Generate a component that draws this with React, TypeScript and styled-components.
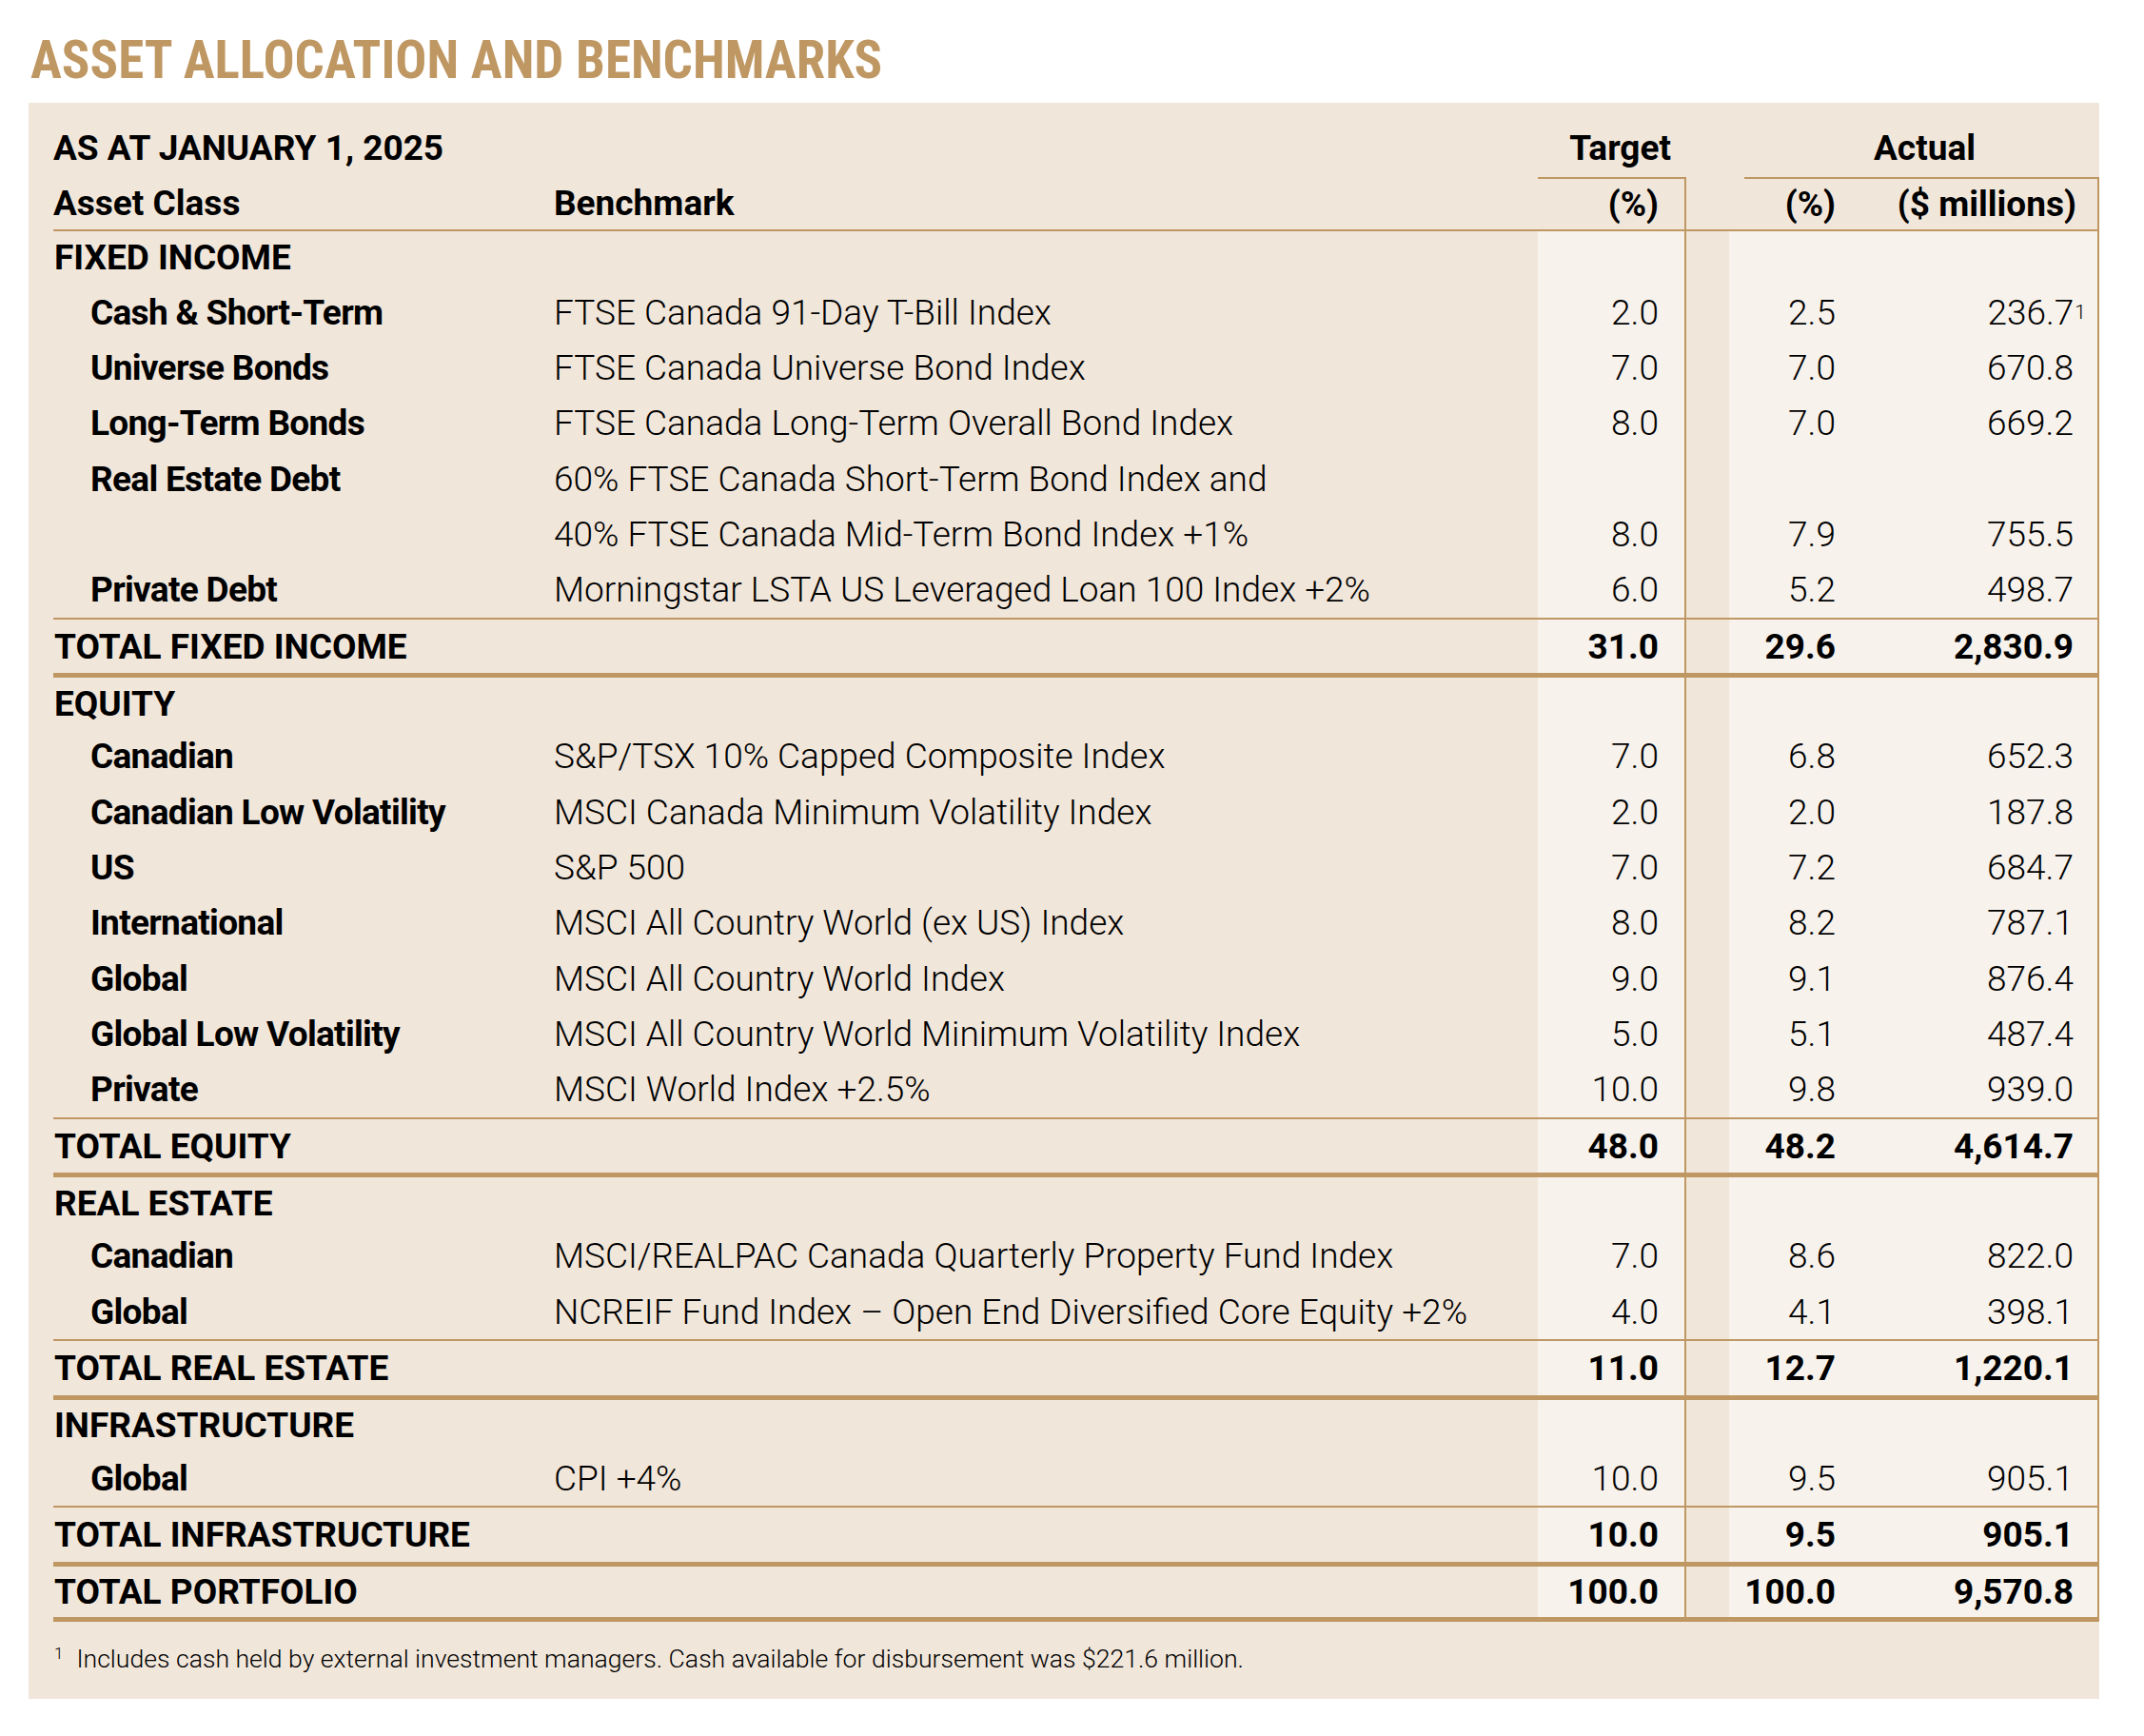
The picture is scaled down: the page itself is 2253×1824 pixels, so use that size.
import React from "react";
import styled, { createGlobalStyle } from "styled-components";

const GOLD = "#BF9762";
const PANEL = "#F1E6DA";
const LIGHT = "#F7F2EC";
const ROW_H = 58.333;

const GlobalStyle = createGlobalStyle`
  html, body { margin: 0; padding: 0; background: #ffffff; }
  body { font-family: Roboto, "Liberation Sans", sans-serif; color: #000; }
`;

const Page = styled.main`
  width: 2253px;
  box-sizing: border-box;
  padding: 36px 0 0 30px;
`;

const Title = styled.h1`
  margin: 0 0 17px 2px;
  font-family: Roboto, "Liberation Sans", sans-serif;
  font-weight: 700;
  font-stretch: 85%;
  font-size: 55px;
  line-height: 55px;
  color: ${GOLD};
`;

const Panel = styled.section`
  width: 2176px;
  box-sizing: border-box;
  background: ${PANEL};
  padding: 16px 0 27px 26px;
`;

const COLS = "526px 1034px 156px 45px 143px 246px";

type Edge = "thin" | "thick" | undefined;
const edge = (e: Edge) =>
  e === "thick" ? `5px solid ${GOLD}` : e === "thin" ? `2px solid ${GOLD}` : "none";

const Row = styled.div<{ $top?: Edge; $bottom?: Edge; $h: number }>`
  display: grid;
  grid-template-columns: ${COLS};
  box-sizing: border-box;
  height: ${(p) => p.$h}px;
  border-top: ${(p) => edge(p.$top)};
  border-bottom: ${(p) => edge(p.$bottom)};
  font-size: 37px;
  line-height: 1;
`;

const Cell = styled.div`
  display: flex;
  align-items: center;
  min-width: 0;
  white-space: nowrap;
`;

const HeadText = styled(Cell)<{ $span?: string }>`
  font-weight: 700;
  grid-column: ${(p) => p.$span ?? "auto"};
`;

const GroupTitle = styled(Cell)<{ $align: "end" | "center"; $span: string; $pr?: number; $ml?: number }>`
  font-weight: 700;
  grid-column: ${(p) => p.$span};
  justify-content: ${(p) => (p.$align === "end" ? "flex-end" : "center")};
  padding-right: ${(p) => p.$pr ?? 0}px;
  margin-left: ${(p) => p.$ml ?? 0}px;
`;

const UnitHead = styled(Cell)<{ $pr: number; $ml?: number; $rule?: boolean }>`
  font-weight: 700;
  justify-content: flex-end;
  box-sizing: border-box;
  padding-right: ${(p) => p.$pr}px;
  margin-left: ${(p) => p.$ml ?? 0}px;
  border-top: 2px solid ${GOLD};
  border-right: ${(p) => (p.$rule ? `2px solid ${GOLD}` : "none")};
`;

const Label = styled(Cell)<{ $indent?: boolean }>`
  font-weight: 700;
  letter-spacing: ${(p) => (p.$indent ? "-0.7px" : "0")};
  padding-left: ${(p) => (p.$indent ? 39 : 1)}px;
`;

const Bench = styled(Cell)`
  font-weight: 300;
`;

const Gap = styled.div``;

const Num = styled(Cell)<{ $pr: number; $bold?: boolean; $rule?: boolean }>`
  justify-content: flex-end;
  box-sizing: border-box;
  background: ${LIGHT};
  padding-right: ${(p) => p.$pr}px;
  font-weight: ${(p) => (p.$bold ? 700 : 300)};
  border-right: ${(p) => (p.$rule ? `2px solid ${GOLD}` : "none")};
`;

const Sup = styled.sup`
  font-size: 21px;
  line-height: 1;
  vertical-align: top;
  margin-right: -13px;
  margin-left: 1px;
  font-weight: 300;
`;

const Footnote = styled.p`
  margin: 24px 0 0 1px;
  display: flex;
  align-items: flex-start;
  font-size: 26.6px;
  font-weight: 300;
  line-height: 30px;
  white-space: nowrap;
`;

const FootMark = styled.span`
  font-size: 17px;
  line-height: 17px;
  margin-right: 14px;
  padding-top: 1px;
`;

type Kind = "section" | "item" | "total";
interface Data {
  kind: Kind;
  label?: string;
  bench?: string;
  t?: string;
  p?: string;
  a?: string;
  sup?: string;
  top?: Edge;
  bottom?: Edge;
}

const rows: Data[] = [
  { kind: "section", label: "FIXED INCOME", top: "thin" },
  { kind: "item", label: "Cash & Short-Term", bench: "FTSE Canada 91-Day T-Bill Index", t: "2.0", p: "2.5", a: "236.7", sup: "1" },
  { kind: "item", label: "Universe Bonds", bench: "FTSE Canada Universe Bond Index", t: "7.0", p: "7.0", a: "670.8" },
  { kind: "item", label: "Long-Term Bonds", bench: "FTSE Canada Long-Term Overall Bond Index", t: "8.0", p: "7.0", a: "669.2" },
  { kind: "item", label: "Real Estate Debt", bench: "60% FTSE Canada Short-Term Bond Index and" },
  { kind: "item", bench: "40% FTSE Canada Mid-Term Bond Index +1%", t: "8.0", p: "7.9", a: "755.5" },
  { kind: "item", label: "Private Debt", bench: "Morningstar LSTA US Leveraged Loan 100 Index +2%", t: "6.0", p: "5.2", a: "498.7" },
  { kind: "total", label: "TOTAL FIXED INCOME", t: "31.0", p: "29.6", a: "2,830.9", top: "thin" },
  { kind: "section", label: "EQUITY", top: "thick" },
  { kind: "item", label: "Canadian", bench: "S&P/TSX 10% Capped Composite Index", t: "7.0", p: "6.8", a: "652.3" },
  { kind: "item", label: "Canadian Low Volatility", bench: "MSCI Canada Minimum Volatility Index", t: "2.0", p: "2.0", a: "187.8" },
  { kind: "item", label: "US", bench: "S&P 500", t: "7.0", p: "7.2", a: "684.7" },
  { kind: "item", label: "International", bench: "MSCI All Country World (ex US) Index", t: "8.0", p: "8.2", a: "787.1" },
  { kind: "item", label: "Global", bench: "MSCI All Country World Index", t: "9.0", p: "9.1", a: "876.4" },
  { kind: "item", label: "Global Low Volatility", bench: "MSCI All Country World Minimum Volatility Index", t: "5.0", p: "5.1", a: "487.4" },
  { kind: "item", label: "Private", bench: "MSCI World Index +2.5%", t: "10.0", p: "9.8", a: "939.0" },
  { kind: "total", label: "TOTAL EQUITY", t: "48.0", p: "48.2", a: "4,614.7", top: "thin" },
  { kind: "section", label: "REAL ESTATE", top: "thick" },
  { kind: "item", label: "Canadian", bench: "MSCI/REALPAC Canada Quarterly Property Fund Index", t: "7.0", p: "8.6", a: "822.0" },
  { kind: "item", label: "Global", bench: "NCREIF Fund Index \u2013 Open End Diversified Core Equity +2%", t: "4.0", p: "4.1", a: "398.1" },
  { kind: "total", label: "TOTAL REAL ESTATE", t: "11.0", p: "12.7", a: "1,220.1", top: "thin" },
  { kind: "section", label: "INFRASTRUCTURE", top: "thick" },
  { kind: "item", label: "Global", bench: "CPI +4%", t: "10.0", p: "9.5", a: "905.1" },
  { kind: "total", label: "TOTAL INFRASTRUCTURE", t: "10.0", p: "9.5", a: "905.1", top: "thin" },
  { kind: "total", label: "TOTAL PORTFOLIO", t: "100.0", p: "100.0", a: "9,570.8", top: "thick", bottom: "thick" },
];

function TableRow({ r }: { r: Data }) {
  const bold = r.kind === "total";
  const h = ROW_H + (r.bottom === "thick" ? 5 : 0);
  return (
    <Row $top={r.top} $bottom={r.bottom} $h={h}>
      <Label $indent={r.kind === "item"}>{r.label ?? ""}</Label>
      <Bench>{r.bench ?? ""}</Bench>
      <Num $pr={27} $rule $bold={bold}>{r.t ?? ""}</Num>
      <Gap />
      <Num $pr={31} $bold={bold}>{r.p ?? ""}</Num>
      <Num $pr={25} $rule $bold={bold}>
        {r.a ?? ""}
        {r.sup ? <Sup>{r.sup}</Sup> : null}
      </Num>
    </Row>
  );
}

export default function App() {
  return (
    <>
      <GlobalStyle />
      <Page>
        <Title>ASSET ALLOCATION AND BENCHMARKS</Title>
        <Panel>
          <Row $h={62}>
            <HeadText $span="1 / 3">AS AT JANUARY 1, 2025</HeadText>
            <GroupTitle $span="3 / 4" $align="end" $pr={16}>Target</GroupTitle>
            <GroupTitle $span="5 / 7" $align="center" $ml={22}>Actual</GroupTitle>
          </Row>
          <Row $h={54.8}>
            <HeadText>Asset Class</HeadText>
            <HeadText>Benchmark</HeadText>
            <UnitHead $pr={27} $rule>(%)</UnitHead>
            <Gap />
            <UnitHead $pr={31} $ml={16}>(%)</UnitHead>
            <UnitHead $pr={22} $rule>($ millions)</UnitHead>
          </Row>
          {rows.map((r, i) => (
            <TableRow key={i} r={r} />
          ))}
          <Footnote>
            <FootMark>1</FootMark>
            Includes cash held by external investment managers. Cash available for disbursement was $221.6 million.
          </Footnote>
        </Panel>
      </Page>
    </>
  );
}
